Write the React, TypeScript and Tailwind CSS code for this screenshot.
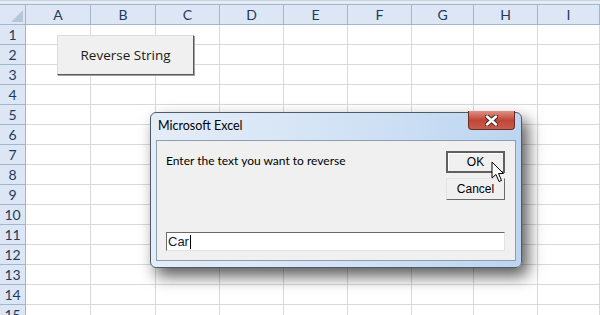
import React from "react";

const colWidths = [65, 65, 64, 64, 64, 64, 62, 64];
const colNames = ["A", "B", "C", "D", "E", "F", "G", "H", "I"];
const rows = Array.from({ length: 15 }, (_, i) => i + 1);

const headFont = { fontFamily: "Lato, 'Open Sans', sans-serif" };
const uiFont = { fontFamily: "'Open Sans', 'Noto Sans', sans-serif" };
const dlgFont = { fontFamily: "Lato, 'Open Sans', sans-serif" };
const sansFont = { fontFamily: "'Liberation Sans', Arial, sans-serif" };

const HeaderRow = () => (
  <div className="flex h-[21px] border-y border-[#9eb6ce] bg-[#dce6f4] text-[14px] text-[#1f3a5e]" style={headFont}>
    <div className="relative w-[26px] shrink-0 border-r border-[#9eb6ce]">
      <div className="absolute right-[2px] bottom-[2px] h-0 w-0 border-b-[12px] border-l-[12px] border-b-[#b7c7db] border-l-transparent" />
    </div>
    {colNames.map((c, i) => (
      <div
        key={c}
        className={`flex items-center justify-center border-r border-[#9eb6ce] ${i < colWidths.length ? "shrink-0" : "flex-1"}`}
        style={i < colWidths.length ? { width: colWidths[i] } : undefined}
      >
        {c}
      </div>
    ))}
  </div>
);

const GridRow = ({ n }: { n: number }) => (
  <div className="flex h-[20px]">
    <div
      className="flex w-[26px] shrink-0 items-center justify-center border-r border-b border-[#9eb6ce] bg-[#dce6f4] text-[14px] text-[#1f3a5e]"
      style={headFont}
    >
      {n}
    </div>
    {colNames.map((c, i) => (
      <div
        key={c}
        className={`border-r border-b border-[#d9d9d9] ${i < colWidths.length ? "shrink-0" : "flex-1"}`}
        style={i < colWidths.length ? { width: colWidths[i] } : undefined}
      />
    ))}
  </div>
);

const Cursor = () => (
  <svg width="14" height="22" viewBox="0 0 14 22" className="absolute left-[491px] top-[161px]">
    <path d="M1 1 L1 17 L5 13.5 L8 20.5 L10.5 19.5 L7.5 12.5 L12.5 12.5 Z" fill="#fff" stroke="#000" strokeWidth="1" strokeLinejoin="round" />
  </svg>
);

const App = () => {
  return (
    <div className="relative h-[315px] w-[600px] overflow-hidden bg-white">
      <div className="h-[4px] bg-[#e6ebf1] border-t border-[#c9d3df]" />
      <HeaderRow />
      {rows.map((n) => (
        <GridRow key={n} n={n} />
      ))}

      {/* macro button on the sheet */}
      <button
        className="absolute left-[57px] top-[35px] flex h-[40px] w-[137px] items-center justify-center border border-[#dcdcdc] border-r-[#5a5a5a] border-b-[#5a5a5a] bg-[#f0f0f0] text-[13.5px] text-[#1a1a1a] shadow-[1px_1px_0_#a0a0a0]"
        style={uiFont}
      >
        Reverse String
      </button>

      {/* InputBox dialog */}
      <div className="absolute left-[150px] top-[112px] flex h-[156px] w-[372px] flex-col rounded-[6px] border border-[#4f5a66] bg-gradient-to-r from-[#e4edf8] via-[#d3e3f5] to-[#bcd5f0] px-[5px] pb-[6px] shadow-[6px_8px_16px_rgba(0,0,0,0.65)]">
        <div className="flex h-[27px] items-center justify-between">
          <span className="pl-[2px] text-[12.5px] text-black" style={dlgFont}>Microsoft Excel</span>
          <div className="-mt-[2px] mr-[1px] flex h-[19px] w-[47px] items-center justify-center self-start rounded-b-[4px] border border-t-0 border-[#6d2a22] bg-gradient-to-b from-[#dc9184] via-[#c14436] to-[#c45e4d]">
            <svg width="13" height="11" viewBox="0 0 13 11">
              <path d="M2 1.5 L11 9.5 M11 1.5 L2 9.5" stroke="#3b2b2b" strokeWidth="4.5" strokeLinecap="round" />
              <path d="M2 1.5 L11 9.5 M11 1.5 L2 9.5" stroke="#fff" strokeWidth="2.5" strokeLinecap="round" />
            </svg>
          </div>
        </div>
        <div className="flex flex-1 flex-col border border-[#8c9db3] bg-[#f0f0f0] pl-[9px] pr-[10px] pt-[10px] pb-[9px]">
          <div className="flex justify-between">
            <span className="pt-[1px] text-[12px] text-black" style={dlgFont}>Enter the text you want to reverse</span>
            <div className="flex w-[59px] flex-col gap-[5px]">
              <button className="h-[22px] border-2 border-[#5f5f5f] bg-[#f0f0f0] text-[12px] text-black shadow-[inset_1px_1px_0_#fff]" style={sansFont}>
                OK
              </button>
              <button className="h-[22px] border border-[#e3e3e3] border-r-[#6a6a6a] border-b-[#6a6a6a] bg-[#f0f0f0] text-[12px] text-black" style={sansFont}>
                Cancel
              </button>
            </div>
          </div>
          <div className="mt-auto flex h-[19px] items-center border border-[#6a6a6a] border-r-[#e3e3e3] border-b-[#e3e3e3] bg-white pl-[1px] text-[13px] text-[#0b1a3a]" style={sansFont}>
            Car<span className="ml-[1px] h-[14px] w-[1px] bg-black" />
          </div>
        </div>
      </div>

      <Cursor />
    </div>
  );
};

export default App;
